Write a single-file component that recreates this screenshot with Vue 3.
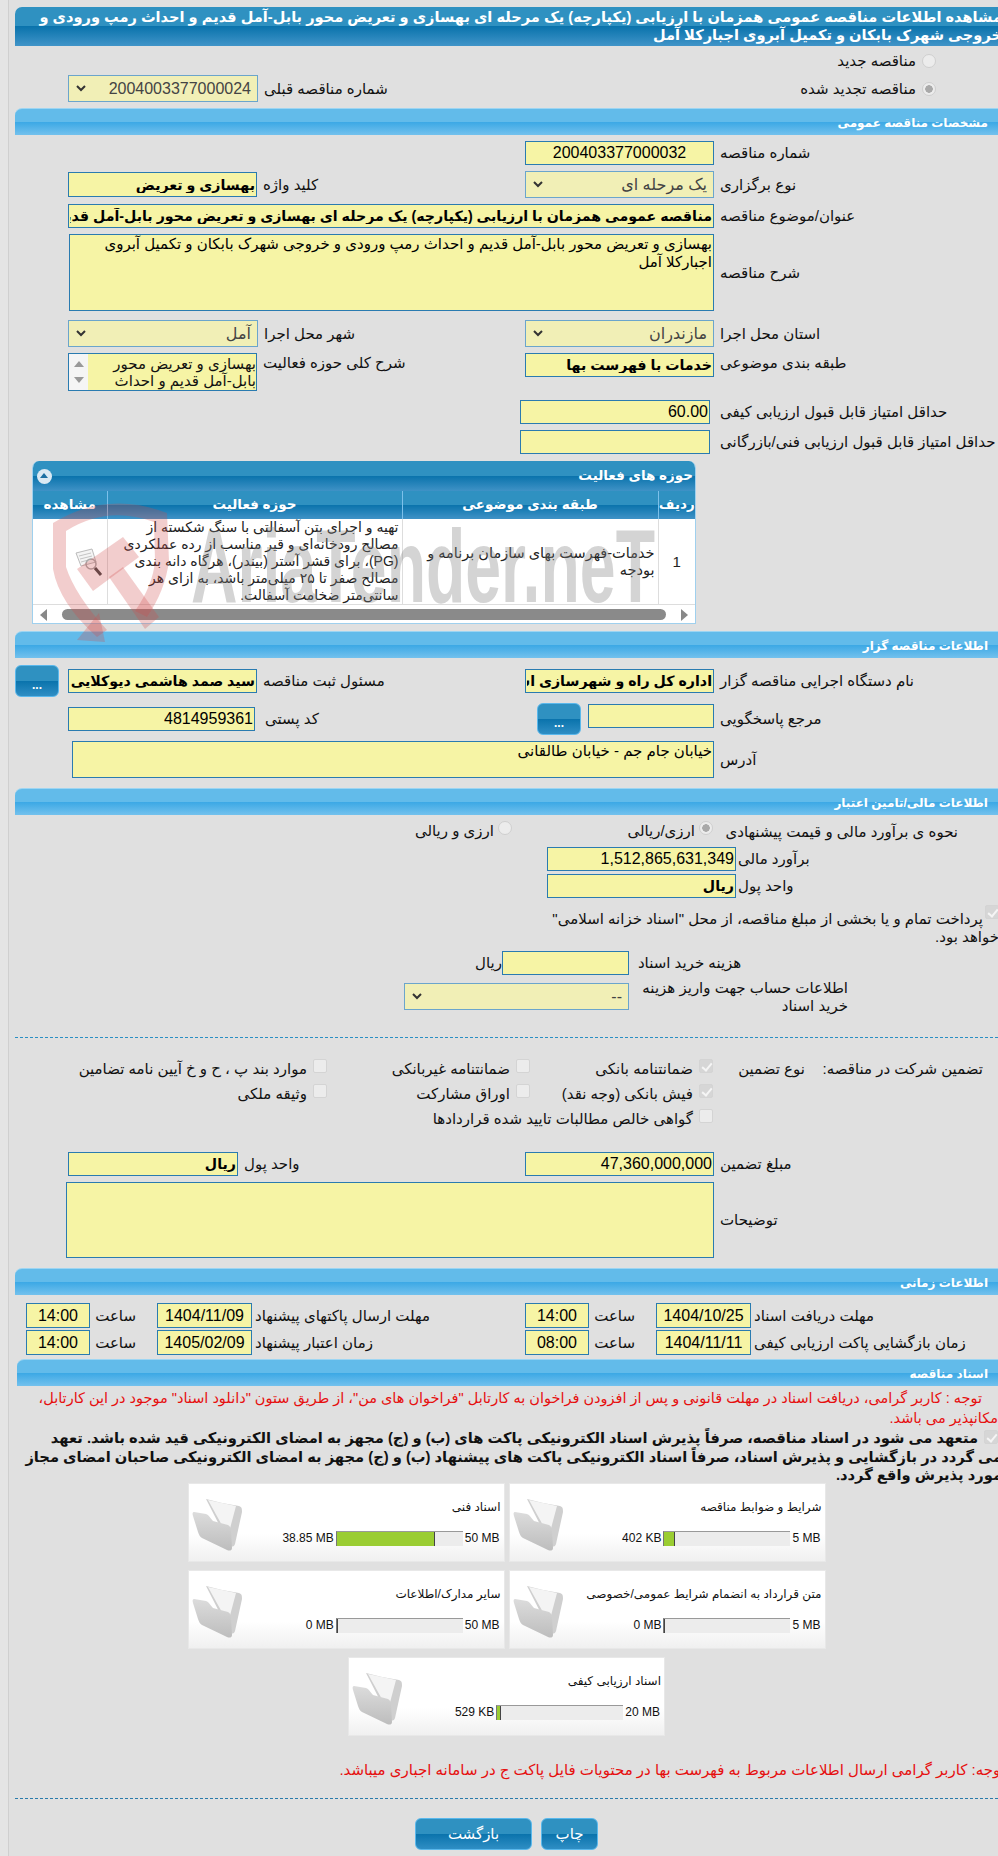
<script setup>
const title = 'مشاهده اطلاعات مناقصه عمومی همزمان با ارزیابی (یکپارچه) یک مرحله ای بهسازی و تعریض محور بابل-آمل قدیم و احداث رمپ ورودی و خروجی شهرک بابکان و تکمیل آبروی اجبارکلا آمل'
const subject = 'مناقصه عمومی همزمان با ارزیابی (یکپارچه) یک مرحله ای بهسازی و تعریض محور بابل-آمل قدیم و احداث رمپ ورودی و خروجی'
const desc = 'بهسازی و تعریض محور بابل-آمل قدیم و احداث رمپ ورودی و خروجی شهرک بابکان و تکمیل آبروی اجبارکلا آمل'
const address = 'خیابان جام جم - خیابان طالقانی'
const docs = [
  { name: 'شرایط و ضوابط مناقصه', used: '402 KB', max: '5 MB', pct: 8 },
  { name: 'اسناد فنی', used: '38.85 MB', max: '50 MB', pct: 78 },
  { name: 'متن قرارداد به انضمام شرایط عمومی/خصوصی', used: '0 MB', max: '5 MB', pct: 0 },
  { name: 'سایر مدارک/اطلاعات', used: '0 MB', max: '50 MB', pct: 0 },
  { name: 'اسناد ارزیابی کیفی', used: '529 KB', max: '20 MB', pct: 3 }
]
</script>

<template>
  <div class="shell">
    <div class="gutter"></div>
    <main class="page" dir="rtl">
      <h1 class="head"><span>{{ title }}</span></h1>

      <div class="radio-row r1"><input class="rd" type="radio" name="n" disabled /><span>مناقصه جدید</span></div>
      <div class="cols r2">
        <div class="field">
          <div class="sel w190"><svg class="chev" viewBox="0 0 10 7"><path d="M1 1l4 4 4-4" /></svg><span>2004003377000024</span></div>
          <label>شماره مناقصه قبلی</label>
        </div>
        <div class="radio-row inner"><input class="rd" type="radio" name="n" checked disabled /><span>مناقصه تجدید شده</span></div>
      </div>

      <h2 class="bar b1">مشخصات مناقصه عمومی</h2>

      <div class="cols r-a">
        <div></div>
        <div class="field"><input class="in w189 ctr" readonly value="200403377000032" /><label>شماره مناقصه</label></div>
      </div>
      <div class="cols r-b">
        <div class="field"><input class="in w189 bold kw" readonly value="بهسازی و تعریض" /><label>کلید واژه</label></div>
        <div class="field"><div class="sel w189"><svg class="chev" viewBox="0 0 10 7"><path d="M1 1l4 4 4-4" /></svg><span>یک مرحله ای</span></div><label>نوع برگزاری</label></div>
      </div>
      <div class="wide r-c"><input class="in grow bold" readonly :value="subject" /><label>عنوان/موضوع مناقصه</label></div>
      <div class="wide r-d"><textarea class="in grow ta h77" readonly :value="desc"></textarea><label>شرح مناقصه</label></div>
      <div class="cols r-e">
        <div class="field"><div class="sel w190"><svg class="chev" viewBox="0 0 10 7"><path d="M1 1l4 4 4-4" /></svg><span>آمل</span></div><label>شهر محل اجرا</label></div>
        <div class="field"><div class="sel w189"><svg class="chev" viewBox="0 0 10 7"><path d="M1 1l4 4 4-4" /></svg><span>مازندران</span></div><label>استان محل اجرا</label></div>
      </div>
      <div class="cols r-f">
        <div class="field top">
          <div class="listbox">
            <div class="lb-scroll"><i class="up"></i><i class="down"></i></div>
            <div class="lb-text">بهسازی و تعریض محور بابل-آمل قدیم و احداث</div>
          </div>
          <label>شرح کلی حوزه فعالیت</label>
        </div>
        <div class="field top"><input class="in w189 bold" readonly value="خدمات با فهرست بها" /><label>طبقه بندی موضوعی</label></div>
      </div>
      <div class="score r-g"><input class="in w190" readonly value="60.00" /><label>حداقل امتیاز قابل قبول ارزیابی کیفی</label></div>
      <div class="score r-h"><input class="in w190" readonly value="" /><label>حداقل امتیاز قابل قبول ارزیابی فنی/بازرگانی</label></div>

      <section class="grid-box">
        <div class="grid-title"><span>حوزه های فعالیت</span><i class="collapse"></i></div>
        <table class="tbl">
          <colgroup><col class="c1" /><col class="c2" /><col class="c3" /><col class="c4" /></colgroup>
          <thead><tr><th>ردیف</th><th>طبقه بندی موضوعی</th><th>حوزه فعالیت</th><th>مشاهده</th></tr></thead>
          <tbody>
            <tr>
              <td class="num">1</td>
              <td>خدمات-فهرست بهای سازمان برنامه و بودجه</td>
              <td class="long">تهیه و اجرای بتن آسفالتی با سنگ شکسته از مصالح رودخانه‌ای و قیر مناسب از رده عملکردی (PG)، برای قشر آستر (بیندر)، هرگاه دانه بندی مصالح صفر تا ۲۵ میلی‌متر باشد، به ازای هر سانتی‌متر ضخامت آسفالت.</td>
              <td class="view">
                <svg class="lens" viewBox="0 0 30 30">
                  <path d="M2 6l16-4 4 13-15 4z" fill="#f4f4f4" stroke="#bbb" />
                  <path d="M5 9l12-3M6 12l12-3M7 15l11-3" stroke="#c4c4c4" />
                  <circle cx="17" cy="17" r="5" fill="none" stroke="#a9a9a9" stroke-width="1.5" />
                  <path d="M21 21l6 7" stroke="#444" stroke-width="3" />
                </svg>
              </td>
            </tr>
          </tbody>
        </table>
        <div class="hscroll" dir="ltr"><i class="al"></i><div class="thumb"></div><i class="ar"></i></div>
      </section>

      <h2 class="bar b2">اطلاعات مناقصه گزار</h2>
      <div class="cols r2-a">
        <div class="field left-btn">
          <button class="dots" type="button">...</button>
          <div class="field"><input class="in w189 bold" readonly value="سید صمد هاشمی دیوکلایی" /><label>مسئول ثبت مناقصه</label></div>
        </div>
        <div class="field"><input class="in w189 bold" readonly value="اداره کل راه و شهرسازی استان مازندران" /><label>نام دستگاه اجرایی مناقصه گزار</label></div>
      </div>
      <div class="cols r2-b">
        <div class="field post"><input class="in w187" readonly value="4814959361" /><label>کد پستی</label></div>
        <div class="field ref"><button class="dots" type="button">...</button><input class="in w126" readonly value="" /><label>مرجع پاسخگویی</label></div>
      </div>
      <div class="wide r2-c addr"><textarea class="in grow ta h37" readonly :value="address"></textarea><label>آدرس</label></div>

      <h2 class="bar b3">اطلاعات مالی/تامین اعتبار</h2>
      <div class="method">
        <label class="m-label">نحوه ی برآورد مالی و قیمت پیشنهادی</label>
        <input class="rd" type="radio" name="m" checked disabled /><span class="m1">ارزی/ریالی</span>
        <input class="rd m2r" type="radio" name="m" disabled /><span class="m2">ارزی و ریالی</span>
      </div>
      <div class="money r3-a"><input class="in w189" readonly value="1,512,865,631,349" /><label>برآورد مالی</label></div>
      <div class="money r3-b"><input class="in w189 bold" readonly value="ریال" /><label>واحد پول</label></div>
      <div class="pay">
        <input class="ck on" type="checkbox" checked disabled />
        <span>پرداخت تمام و یا بخشی از مبلغ مناقصه، از محل "اسناد خزانه اسلامی" خواهد بود.</span>
      </div>
      <div class="fee r3-c"><span class="rial">ریال</span><input class="in w127" readonly value="" /><label>هزینه خرید اسناد</label></div>
      <div class="fee r3-d"><div class="sel w225"><svg class="chev" viewBox="0 0 10 7"><path d="M1 1l4 4 4-4" /></svg><span>--</span></div><label class="two-line">اطلاعات حساب جهت واریز هزینه خرید اسناد</label></div>
      <hr class="dash d1" />

      <div class="guar">
        <span>تضمین شرکت در مناقصه:</span>
        <span>نوع تضمین</span>
        <div class="opt"><input class="ck on" type="checkbox" checked disabled /><span>ضمانتنامه بانکی</span></div>
        <div class="opt"><input class="ck" type="checkbox" disabled /><span>ضمانتنامه غیربانکی</span></div>
        <div class="opt"><input class="ck" type="checkbox" disabled /><span>موارد بند پ ، ح و خ آیین نامه تضامین</span></div>
        <span></span><span></span>
        <div class="opt"><input class="ck on" type="checkbox" checked disabled /><span>فیش بانکی (وجه نقد)</span></div>
        <div class="opt"><input class="ck" type="checkbox" disabled /><span>اوراق مشارکت</span></div>
        <div class="opt"><input class="ck" type="checkbox" disabled /><span>وثیقه ملکی</span></div>
        <span></span><span></span>
        <div class="opt span3"><input class="ck" type="checkbox" disabled /><span>گواهی خالص مطالبات تایید شده قراردادها</span></div>
      </div>

      <div class="cols r3-e">
        <div class="field"><input class="in w170 bold" readonly value="ریال" /><label>واحد پول</label></div>
        <div class="field"><input class="in w189" readonly value="47,360,000,000" /><label>مبلغ تضمین</label></div>
      </div>
      <div class="wide r3-f note"><textarea class="in grow ta h76" readonly></textarea><label>توضیحات</label></div>

      <h2 class="bar b4">اطلاعات زمانی</h2>
      <div class="times r4-a">
        <div class="t-group">
          <input class="in t-time" readonly value="14:00" /><label>ساعت</label>
          <input class="in t-date" readonly value="1404/11/09" /><label>مهلت ارسال پاکتهای پیشنهاد</label>
        </div>
        <div class="t-group">
          <input class="in t-time" readonly value="14:00" /><label>ساعت</label>
          <input class="in t-date" readonly value="1404/10/25" /><label>مهلت دریافت اسناد</label>
        </div>
      </div>
      <div class="times r4-b">
        <div class="t-group">
          <input class="in t-time" readonly value="14:00" /><label>ساعت</label>
          <input class="in t-date" readonly value="1405/02/09" /><label>زمان اعتبار پیشنهاد</label>
        </div>
        <div class="t-group">
          <input class="in t-time" readonly value="08:00" /><label>ساعت</label>
          <input class="in t-date" readonly value="1404/11/11" /><label>زمان بازگشایی پاکت ارزیابی کیفی</label>
        </div>
      </div>

      <h2 class="bar b5">اسناد مناقصه</h2>
      <p class="red">توجه : کاربر گرامی، دریافت اسناد در مهلت قانونی و پس از افزودن فراخوان به کارتابل "فراخوان های من"، از طریق ستون "دانلود اسناد" موجود در این کارتابل، امکانپذیر می باشد.</p>
      <p class="pledge"><input class="ck on" type="checkbox" checked disabled /> متعهد می شود در اسناد مناقصه، صرفاً پذیرش اسناد الکترونیکی پاکت های (ب) و (ج) مجهز به امضای الکترونیکی قید شده باشد. تعهد<br />می گردد در بازگشایی و پذیرش اسناد، صرفاً اسناد الکترونیکی پاکت های پیشنهاد (ب) و (ج) مجهز به امضای الکترونیکی صاحبان امضای مجاز<br />مورد پذیرش واقع گردد.</p>

      <div class="cards">
        <article v-for="d in docs" :key="d.name" class="card" dir="ltr">
          <svg class="folder" viewBox="0 0 52 56">
            <defs>
              <linearGradient id="fg" x1="0" y1="0" x2="0" y2="1"><stop offset="0" stop-color="#dcdcdc" /><stop offset="1" stop-color="#bdbdbd" /></linearGradient>
            </defs>
            <path d="M14 4l16 4 17 3c3 1 3 3 3 6l-7 32c-1 3-3 3-5 2z" fill="#cfcfcf" />
            <path d="M16 5l28 6-8 30z" fill="#f4f4f4" />
            <path d="M2 17l12 2c3 1 4 4 7 7l15 4c2 1 3 3 3 6l1 17c0 3-3 3-5 2L10 43c-2-1-3-3-4-6L1 21c-1-3 0-4 1-4z" fill="url(#fg)" />
          </svg>
          <div class="card-body">
            <div class="card-title" dir="rtl">{{ d.name }}</div>
            <div class="prog">
              <span>{{ d.used }}</span>
              <div class="track"><div class="fill" :style="{ width: d.pct + '%' }"></div></div>
              <span>{{ d.max }}</span>
            </div>
          </div>
        </article>
      </div>

      <p class="red note2"><span>توجه: کاربر گرامی ارسال اطلاعات مربوط به فهرست بها در محتویات فایل پاکت ج در سامانه اجباری میباشد.</span></p>
      <hr class="dash d2" />
      <div class="actions">
        <button class="act print" type="button">چاپ</button>
        <button class="act back" type="button">بازگشت</button>
      </div>

      <svg class="mark" viewBox="0 0 640 150" aria-hidden="true">
        <g fill="#d24a4a" fill-opacity=".28">
          <path d="M8 28Q62 -5 122 18L124 66Q120 96 102 122L90 116Q108 90 110 66L109 27Q62 10 21 36L21 72Q30 100 62 135L52 142Q14 108 8 74z" />
          <path d="M32 74L78 42 94 62 48 96z" />
          <path d="M64 82L78 72 114 122 100 134z" />
          <path d="M32 145L60 147 54 118z" />
        </g>
        <text x="146" y="107" font-family="Liberation Sans, sans-serif" font-weight="700" font-size="104" fill="#808080" fill-opacity=".34" textLength="464" lengthAdjust="spacingAndGlyphs">AriaTender.neT</text>
      </svg>
    </main>
  </div>
</template>

<style>
html, body { margin: 0; background: #e0e0e0; overflow: hidden; }
</style>

<style scoped>
.shell { display: flex; min-height: 1856px; background: #e0e0e0; font: 15px/1.2 "Liberation Sans", "DejaVu Sans", sans-serif; color: #111; }
.gutter { width: 8px; flex: none; background: #e4e4e4; border-right: 1px solid #cfcfcf; }
.page { position: relative; width: 983px; margin: 0 0 0 6px; padding-top: 7px; overflow: hidden; flex: none; }

.head { margin: 0; height: 39px; box-sizing: border-box; padding: 1px 0 0; overflow: hidden; color: #fff; font-size: 14.6px; font-weight: 700; line-height: 18px; border-radius: 7px 0 0 0; background: linear-gradient(#2f91c1 0 50%, #0a73ac 50%, #4094c8 100%); }
.head span { display: block; margin-right: -4px; }

.bar { margin: 0; height: 27px; box-sizing: border-box; padding: 0 10px; color: #fff; font-size: 12px; line-height: 28px; font-weight: 700; border-radius: 7px 0 0 0; background: linear-gradient(#62bbea 0 50%, #3ba8e5 50%, #73c1ed 100%); border-top: 1px solid #9dd5f2; }

.cols { display: grid; grid-template-columns: 457px 1fr; padding-left: 53px; direction: ltr; }
.field { display: flex; align-items: center; gap: 6px; direction: ltr; }
.field.top { align-items: flex-start; }
.field label, .wide label, .score label, .money label, .fee label, .t-group label { direction: rtl; white-space: nowrap; flex: none; }
.field.top label { margin-top: 1px; }

.in { box-sizing: border-box; height: 24px; padding: 0 1px; margin: 0; direction: rtl; background: #f6f4a5; border: 1px solid #2a7bb0; border-radius: 0; outline: 0; color: #000; font: 16px/22px "Liberation Sans", "DejaVu Sans", sans-serif; overflow: hidden; flex: none; }
.in.bold { font-size: 14.2px; font-weight: 700; }
.in.ctr { text-align: center; }
.in.ta { resize: none; font-size: 15px; line-height: 18px; display: block; }
.grow { flex: none; width: 646px; }
.w126 { width: 126px; } .w127 { width: 127px; } .w170 { width: 170px; } .w187 { width: 187px; } .w189 { width: 189px; } .w190 { width: 190px; } .w225 { width: 225px; }
.h37 { height: 37px; } .h76 { height: 76px; } .h77 { height: 77px; }
.sel { box-sizing: border-box; height: 27px; display: flex; align-items: center; justify-content: space-between; padding: 0 6px 0 7px; direction: ltr; background: #f1efb6; border: 1px solid #6ba5cc; color: #444; font-size: 16px; flex: none; }
.sel span { direction: rtl; }
.chev { width: 10px; height: 7px; fill: none; stroke: #333; stroke-width: 2; }

.rd, .ck { appearance: none; -webkit-appearance: none; margin: 0; flex: none; box-sizing: border-box; position: relative; }
.rd { width: 14px; height: 14px; border-radius: 50%; background: #ececec; border: 1px solid #cfcfcf; }
.rd:checked { background: radial-gradient(circle, #a9a9a9 0 3.5px, #ececec 4px); }
.ck { width: 14px; height: 14px; border-radius: 2px; background: #ececec; border: 1px solid #d4d4d4; }
.ck.on { background: #d6d6d6; }
.ck.on::after { content: ""; position: absolute; left: 4px; top: 1px; width: 4px; height: 8px; border: solid #f5f5f5; border-width: 0 2px 2px 0; transform: rotate(40deg); }

.radio-row { display: flex; align-items: center; gap: 6px; }
.r1 { height: 29px; padding-right: 62px; }
.radio-row.inner { direction: rtl; padding-right: 62px; }
.r2 { height: 27px; margin-top: 0; }
.b1 { margin-top: 6px; }
.r-a { margin-top: 6px; }
.r-b { margin-top: 6px; height: 27px; }
.r-b .in { height: 25px; }
.wide { display: flex; align-items: center; gap: 6px; direction: ltr; padding-left: 53px; }
.r-c { margin-top: 6px; }
.r-d { margin-top: 6px; padding-left: 54px; }
.r-d .grow { width: 645px; }
.r-e { margin-top: 9px; height: 27px; }
.r-f { margin-top: 6px; height: 38px; }
.score { display: flex; align-items: center; gap: 10px; direction: ltr; padding-left: 505px; }
.r-g { margin-top: 9px; }
.r-h { margin-top: 6px; }

.listbox { box-sizing: border-box; width: 189px; height: 38px; display: flex; direction: ltr; border: 1px solid #2a7bb0; background: #f6f4a5; overflow: hidden; }
.lb-scroll { width: 19px; flex: none; background: #f5f5f5; display: flex; flex-direction: column; justify-content: space-between; align-items: center; padding: 7px 0; box-sizing: border-box; }
.lb-scroll i { width: 0; height: 0; border: 5px solid transparent; }
.lb-scroll .up { border-top: 0; border-bottom: 6px solid #999; }
.lb-scroll .down { border-bottom: 0; border-top: 6px solid #999; }
.lb-text { flex: 1; direction: rtl; font-size: 15px; line-height: 17px; padding: 1px 0 0; overflow: hidden; }

.grid-box { position: relative; margin: 7px auto 0 17px; width: 664px; height: 163px; box-sizing: border-box; background: #fff; border: 1px solid #9fd0ee; border-top: 0; border-radius: 7px 7px 0 0; overflow: hidden; }
.grid-title { height: 30px; display: flex; align-items: center; justify-content: space-between; padding: 0 2px 0 4px; color: #fff; font-size: 13.5px; font-weight: 700; background: linear-gradient(#2f91c1 0 50%, #0a73ac 50%, #3f92c6 100%); }
.collapse { width: 15px; height: 15px; border-radius: 50%; background: #dbe9f3; position: relative; flex: none; }
.collapse::after { content: ""; position: absolute; left: 3px; top: 4px; border: 4.5px solid transparent; border-top: 0; border-bottom: 5px solid #1d6fa3; }
.tbl { width: 662px; border-collapse: collapse; table-layout: fixed; direction: rtl; }
.c1 { width: 37px; } .c2 { width: 256px; } .c3 { width: 295px; } .c4 { width: 74px; }
.tbl th { height: 28px; padding: 0; color: #fff; font-size: 13.5px; font-weight: 700; border-left: 1px solid #7cc0ea; background: linear-gradient(#2f91c1 0 50%, #0a73ac 50%, #3f92c6 100%); }
.tbl th:last-child { border-left: 0; }
.tbl td { height: 85px; box-sizing: border-box; padding: 0 3px; font-size: 14.5px; line-height: 17px; vertical-align: middle; border-left: 1px solid #ddd; color: #222; }
.tbl td:last-child { border-left: 0; }
.tbl td.num { text-align: center; font-size: 15px; }
.tbl td.long { padding-left: 3px; font-size: 14px; }
.view { text-align: center; }
.lens { width: 30px; height: 30px; display: block; margin: 0 0 0 auto; }
.hscroll { display: flex; align-items: center; height: 20px; background: #fff; border-top: 1px solid #ddd; padding: 0 7px; gap: 15px; box-sizing: border-box; }
.hscroll i { width: 0; height: 0; border: 6px solid transparent; flex: none; }
.hscroll .al { border-left: 0; border-right: 7px solid #888; }
.hscroll .ar { border-right: 0; border-left: 7px solid #888; }
.thumb { flex: 1; height: 11px; background: #8a8a8a; border-radius: 6px; }

.b2 { margin-top: 7px; }
.r2-a { margin-top: 7px; height: 32px; padding-left: 0; grid-template-columns: 510px 1fr; }
.left-btn { gap: 9px; }
.dots { box-sizing: border-box; width: 44px; height: 32px; padding: 8px 0 0; border: 1px solid #5ab8ec; border-radius: 6px; color: #fff; font: 700 12px "Liberation Sans", sans-serif; background: linear-gradient(#2f91c1 0 50%, #0a73ac 50%, #2f8ec4 100%); flex: none; }
.r2-b { margin-top: 6px; height: 32px; align-items: start; }
.post { margin-top: 4px; gap: 10px; }
.ref { margin-left: -1px; gap: 6px; }
.ref .dots { margin-left: 13px; margin-right: 1px; }
.ref .in { margin-top: 1px; margin-bottom: 7px; }
.addr { margin-top: 6px; padding-left: 57px; }
.addr .grow { width: 642px; }
.b3 { margin-top: 10px; }

.method { display: flex; align-items: center; height: 32px; padding-right: 40px; }
.m-label { margin-left: 7px; width: 238px; flex: none; margin-top: 2px; }
.method .rd { margin-top: -7px; }
.m1 { margin-right: 4px; width: 183px; flex: none; }
.method .m2r { margin-right: 0; }
.m2 { margin-right: 4px; }
.money { display: flex; align-items: center; gap: 2px; direction: ltr; padding-left: 532px; }
.r3-a { margin-top: 0; }
.r3-b { margin-top: 3px; }
.pay { margin-top: 7px; height: 46px; line-height: 18px; position: relative; margin-right: -1px; width: 470px; }
.pay .ck { position: absolute; right: 0; top: 0; }
.pay span { display: block; text-indent: 16px; padding-top: 5px; }
.fee { display: flex; align-items: center; direction: ltr; gap: 9px; padding-left: 460px; }
.r3-c { margin-top: 0; }
.rial { direction: rtl; margin-right: -9px; }
.r3-d { margin-top: 8px; padding-left: 389px; height: 27px; }
.two-line { white-space: normal !important; width: 210px; line-height: 18px; }
.dash { border: 0; border-top: 1px dashed #2a8fc4; margin: 0; }
.d1 { margin-top: 27px; }

.guar { margin-top: 18px; display: grid; grid-template-columns: 178px 92px 183px 203px 1fr; grid-auto-rows: 25px; padding-right: 15px; align-items: center; }
.opt { display: flex; align-items: center; gap: 6px; }
.opt .ck { margin-top: -6px; }
.span3 { grid-column: span 3; }

.r3-e { margin-top: 21px; }
.r3-e .in { height: 24px; }
.note { margin-top: 6px; padding-left: 51px; }
.note .grow { width: 648px; }
.b4 { margin-top: 10px; }
.times { display: grid; grid-template-columns: 499px 1fr; direction: ltr; padding-left: 11px; }
.t-group { display: flex; align-items: center; gap: 3px; }
.t-time { width: 64px; height: 25px; text-align: center; }
.t-date { width: 95px; height: 25px; text-align: center; font-size: 16px; margin-left: 18px; }
.t-group label:first-of-type { width: 43px; }
.r4-a { margin-top: 8px; }
.r4-b { margin-top: 2px; }
.b5 { margin: 4px 0 0 2px; }

.red { margin: 2px -4px 0 0; padding: 0; color: #e60f0f; font-size: 14.5px; line-height: 20px; text-indent: 20px; }
.pledge { margin: 1px -4px 0 0; font-size: 14.7px; font-weight: 700; line-height: 18.5px; position: relative; text-indent: 24px; white-space: nowrap; }
.pledge .ck { position: absolute; right: 4px; top: 1px; }
.cards { display: flex; flex-wrap: wrap; justify-content: center; gap: 8px 4px; width: 640px; margin: -2px auto 0; }
.card { box-sizing: border-box; width: 317px; height: 79px; display: flex; background: linear-gradient(#fff 65%, #f0f0f0); border: 1px solid #e8e8e8; }
.folder { width: 52px; height: 56px; margin: 11px 0 0 3px; flex: none; }
.card-body { flex: 1; display: flex; flex-direction: column; padding-right: 3px; }
.card-title { font-size: 12px; line-height: 16px; margin-top: 15px; }
.prog { display: flex; justify-content: flex-end; align-items: center; gap: 2px; margin-top: 16px; font-size: 12px; padding-right: 1px; }
.track { width: 127px; height: 15px; box-sizing: border-box; background: #ececec; border-top: 1px solid #999; border-left: 1px solid #777; flex: none; }
.fill { height: 100%; box-sizing: border-box; background: #9acd32; border-right: 1px solid #444; }
.note2 { margin-top: 24px; text-indent: 0; white-space: nowrap; font-size: 15px; }
.note2 span { display: block; margin-right: -3px; }
.d2 { margin-top: 18px; border-top-color: #2a7bab; }
.actions { display: flex; justify-content: flex-start; gap: 9px; margin-top: 19px; padding-right: 400px; }
.act { box-sizing: border-box; height: 32px; border: 1px solid #5ab8ec; border-radius: 6px; color: #fff; font: 15px "Liberation Sans", "DejaVu Sans", sans-serif; background: linear-gradient(#2f91c1 0 50%, #0a73ac 50%, #2f8ec4 100%); }
.print { width: 57px; }
.back { width: 117px; }

.mark { position: absolute; left: 30px; top: 495px; width: 640px; height: 150px; pointer-events: none; direction: ltr; }
</style>
